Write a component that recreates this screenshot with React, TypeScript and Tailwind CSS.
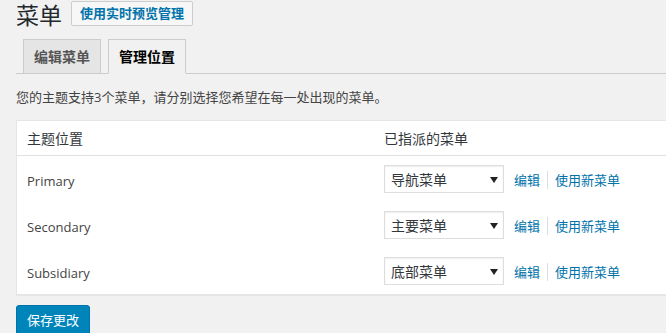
import React from 'react';

const font = "font-['Open_Sans','Noto_Sans_CJK_SC',sans-serif]";

const locations = [
  { name: 'Primary', menu: '导航菜单' },
  { name: 'Secondary', menu: '主要菜单' },
  { name: 'Subsidiary', menu: '底部菜单' },
];

const MenuSelect: React.FC<{ value: string }> = ({ value }) => (
  <div className="w-[120px] h-[28px] border border-[#ddd] bg-white shadow-[inset_0_1px_2px_rgba(0,0,0,0.07)] flex items-center justify-between pl-[6px] pr-[5px]">
    <span className="text-[14px] text-[#32373c] leading-none pt-[1px]">{value}</span>
    <svg width="8" height="6" viewBox="0 0 8 6" className="mt-[1px]">
      <path d="M0 0 H8 L4 6 Z" fill="#222" />
    </svg>
  </div>
);

export default function App() {
  return (
    <div className={`${font} min-h-[333px] bg-[#f1f1f1] pl-4 overflow-hidden`}>
      {/* 标题 */}
      <div className="flex items-start h-[30px]">
        <h1 className="text-[23px] leading-[28px] pt-[1px] font-normal text-[#23282d]">菜单</h1>
        <button className="ml-[9px] h-[25px] mt-[1px] px-[8px] border border-[#ccc] rounded-[2px] bg-[#f7f7f7] text-[13px] font-semibold text-[#0073aa] leading-none">
          使用实时预览管理
        </button>
      </div>

      {/* 选项卡 */}
      <div className="mt-[9px] flex items-end h-[35px] border-b border-[#ccc]">
        <div className="ml-[7px] -mb-px h-[35px] px-[10px] border border-[#ccc] bg-[#e5e5e5] flex items-center text-[14px] font-semibold text-[#555]">
          编辑菜单
        </div>
        <div className="ml-[7px] -mb-px h-[35px] px-[10px] border border-[#ccc] border-b-[#f1f1f1] bg-[#f1f1f1] flex items-center text-[14px] font-semibold text-black">
          管理位置
        </div>
      </div>

      <p className="mt-[13px] text-[13px] leading-[20px] text-[#444]">
        您的主题支持3个菜单，请分别选择您希望在每一处出现的菜单。
      </p>

      {/* 菜单位置表格 */}
      <div className="mt-[13px] w-[700px] bg-white border border-[#e5e5e5] shadow-[0_1px_1px_rgba(0,0,0,0.04)]">
        <div className="h-[35px] flex items-center border-b border-[#e1e1e1] text-[14px] text-[#32373c]">
          <div className="w-[357px] pl-[10px]">主题位置</div>
          <div className="pl-[10px]">已指派的菜单</div>
        </div>
        {locations.map(loc => (
          <div key={loc.name} className="h-[46px] flex items-center">
            <div className="w-[357px] pl-[10px] text-[13px] text-[#444] pt-[5px]">{loc.name}</div>
            <div className="pl-[10px] flex items-center">
              <MenuSelect value={loc.menu} />
              <a className="ml-[10px] pt-[3px] text-[13px] text-[#0073aa]">编辑</a>
              <span className="mx-[7px] mt-[2px] w-px h-[18px] bg-[#ddd]" />
              <a className="pt-[3px] text-[13px] text-[#0073aa]">使用新菜单</a>
            </div>
          </div>
        ))}
      </div>

      <button className="mt-[10px] w-[74px] h-[30px] rounded-[3px] bg-[#0085ba] border border-[#0073aa] shadow-[0_1px_0_#006799] text-[13px] text-white leading-none">
        保存更改
      </button>
    </div>
  );
}
